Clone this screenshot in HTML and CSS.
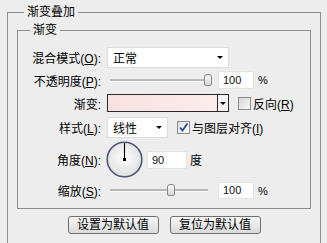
FILE: index.html
```html
<!DOCTYPE html>
<html>
<head>
<meta charset="utf-8">
<link rel="stylesheet" href="styles.css">
</head>
<body>
<div class="panel">
  <fieldset class="group outer">
    <legend>渐变叠加</legend>
    <fieldset class="group inner">
      <legend>渐变</legend>
      <div class="row r1">
        <span class="lbl">混合模式(<u>O</u>):</span>
        <div class="select blend"><span>正常</span><i class="arrow"></i></div>
      </div>
      <div class="row r2">
        <span class="lbl">不透明度(<u>P</u>):</span>
        <div class="slider"><div class="track"><span class="thumb" style="left:100%"></span></div></div>
        <div class="field pct">100</div>
        <span class="unit">%</span>
      </div>
      <div class="row r3">
        <span class="lbl">渐变:</span>
        <div class="gradient"><span class="fill"></span><span class="drop"><i class="arrow"></i></span></div>
        <span class="check"></span>
        <span class="ctext">反向(<u>R</u>)</span>
      </div>
      <div class="row r4">
        <span class="lbl">样式(<u>L</u>):</span>
        <div class="select style"><span>线性</span><i class="arrow"></i></div>
        <span class="check on"><svg width="11" height="11" viewBox="0 0 11 11"><path d="M2 5.5 L4.5 8.5 L9.5 1.5" fill="none" stroke="#2c4a94" stroke-width="1.8"/></svg></span>
        <span class="ctext">与图层对齐(<u>I</u>)</span>
      </div>
      <div class="row r5">
        <span class="lbl">角度(<u>N</u>):</span>
        <svg class="dial" width="37" height="37" viewBox="0 0 37 37">
          <defs>
            <radialGradient id="dg" cx="50%" cy="45%" r="60%">
              <stop offset="0" stop-color="#ffffff"/>
              <stop offset="1" stop-color="#dcdcdc"/>
            </radialGradient>
          </defs>
          <circle cx="18.5" cy="18.5" r="17.3" fill="url(#dg)" stroke="#4a5676" stroke-width="1.6"/>
          <line x1="18.5" y1="18.5" x2="18.5" y2="2" stroke="#000" stroke-width="1.1"/>
          <rect x="17" y="17" width="3" height="3" fill="#000"/>
        </svg>
        <div class="field deg">90</div>
        <span class="unit dunit">度</span>
      </div>
      <div class="row r6">
        <span class="lbl">缩放(<u>S</u>):</span>
        <div class="slider"><div class="track"><span class="thumb" style="left:62%"></span></div></div>
        <div class="field pct">100</div>
        <span class="unit">%</span>
      </div>
    </fieldset>
    <div class="buttons">
      <button class="btn">设置为默认值</button>
      <button class="btn">复位为默认值</button>
    </div>
  </fieldset>
</div>
</body>
</html>
```

FILE: styles.css
```css
html, body {
  margin: 0;
  padding: 0;
  background: #ededed;
  overflow: hidden;
}
body {
  width: 327px;
  height: 243px;
  font-family: "Liberation Sans", "Noto Sans CJK SC", sans-serif;
  font-size: 12px;
  color: #000;
}
.panel {
  padding: 5px 6px 0 7px;
}
.group {
  margin: 0;
  border: 1px solid #8e8e8e;
  min-width: 0;
}
.group > legend {
  padding: 0 3px;
  line-height: 15px;
  height: 15px;
  font-size: 12px;
}
.outer {
  padding: 3px 9px 40px 9px;
}
.outer > legend {
  margin-left: 7px;
}
.inner {
  padding: 9px 0 9px 0;
}
.inner > legend {
  margin-left: 12px;
}
.row {
  display: flex;
  align-items: center;
}
.r1 { height: 21px; }
.r2 { height: 18px; margin-top: 3px; }
.r3 { height: 18px; margin-top: 5px; }
.r4 { height: 21px; margin-top: 5px; }
.r5 { height: 37px; margin-top: 3px; }
.r6 { height: 17px; margin-top: 4px; }
.lbl {
  width: 83px;
  text-align: right;
  margin-right: 6px;
  white-space: nowrap;
  flex: none;
}
u { text-decoration: underline; text-underline-offset: 1px; }
.select {
  box-sizing: border-box;
  height: 21px;
  background: #fff;
  border: 1px solid #dcdcdc;
  display: flex;
  align-items: center;
  justify-content: space-between;
  padding: 0 5px 0 5px;
}
.blend { width: 122px; }
.style { width: 61px; }
.arrow {
  display: block;
  width: 0;
  height: 0;
  border-left: 3px solid transparent;
  border-right: 3px solid transparent;
  border-top: 3px solid #000;
}
.slider {
  width: 111px;
  box-sizing: border-box;
  padding: 0 10px 0 3px;
  flex: none;
}
.track {
  position: relative;
  height: 2px;
  background: #b9b9b9;
  border-bottom: 1px solid #f8f8f8;
}
.thumb {
  position: absolute;
  top: -5px;
  width: 6px;
  height: 10px;
  margin-left: -4px;
  border: 1px solid #8a8a8a;
  border-radius: 3px 3px 2px 2px;
  background: linear-gradient(#fafafa, #d6d6d6);
}
.field {
  box-sizing: border-box;
  height: 18px;
  background: #fff;
  border: 1px solid #e4e4e4;
  padding-left: 4px;
  line-height: 16px;
  font-size: 11px;
  color: #101010;
  flex: none;
}
.pct { width: 36px; }
.r6 .field { height: 17px; line-height: 15px; }
.unit { margin-left: 4px; font-size: 11px; }
.dunit { margin-left: 3px; font-size: 12px; }
.deg { width: 40px; margin-left: 4px; }
.dial { display: block; flex: none; margin-left: -1px; }
.gradient {
  box-sizing: border-box;
  width: 122px;
  height: 18px;
  border: 1px solid #2a2a2a;
  display: flex;
  flex: none;
}
.gradient .fill {
  flex: 1;
  background: linear-gradient(to right, #f8e1e1, #fcecec);
}
.gradient .drop {
  width: 10px;
  border-left: 1px solid #2a2a2a;
  background: #f4f4f4;
  display: flex;
  align-items: center;
  justify-content: center;
}
.check {
  box-sizing: border-box;
  width: 13px;
  height: 13px;
  border: 1px solid #8c8c8c;
  background: linear-gradient(135deg, #d6d6d6, #f9f9f9);
  margin-left: 9px;
  flex: none;
  display: flex;
  align-items: center;
  justify-content: center;
}
.check.on { background: linear-gradient(135deg, #e0e0e0, #fbfbfb); }
.check svg { display: block; }
.ctext { margin-left: 2px; white-space: nowrap; }
.buttons {
  display: flex;
  justify-content: center;
  gap: 11px;
  margin-top: 7px;
}
.btn {
  box-sizing: border-box;
  width: 91px;
  height: 18px;
  padding: 0;
  margin: 0;
  border: 1px solid #6f6f6f;
  border-radius: 3px;
  background: linear-gradient(#f7f7f7, #dadada);
  font-family: "Liberation Sans", "Noto Sans CJK SC", sans-serif;
  font-size: 12px;
  line-height: 16px;
  color: #000;
}
```
